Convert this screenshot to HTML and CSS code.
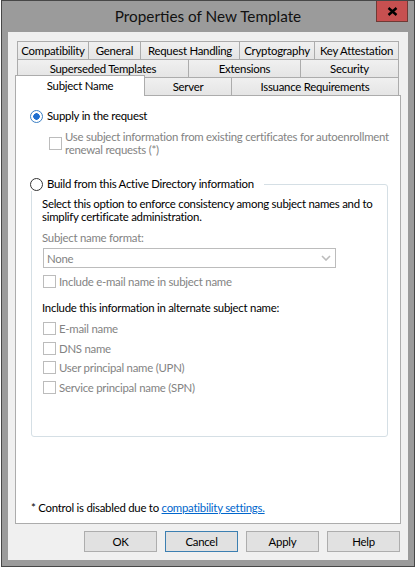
FILE: index.html
```html
<!DOCTYPE html>
<html lang="en">
<head>
    <meta charset="UTF-8">
    <meta name="viewport" content="width=device-width, initial-scale=1.0">
    <title>Properties of New Template</title>
    <link rel="stylesheet" href="styles.css">
</head>
<body>
    <div class="window">
        <div class="titlebar">
            <span></span>
            <div class="title">Properties of New Template</div>
            <div class="titlebar-end">
                <button class="close-btn" aria-label="Close">
                    <svg width="11" height="9" viewBox="0 0 11 9">
                        <path d="M1.5 1 L9.5 8 M9.5 1 L1.5 8" stroke="#000" stroke-width="2.4" fill="none"/>
                    </svg>
                </button>
            </div>
        </div>

        <div class="client">
            <div class="tabs">
                <div class="tab-row row-1">
                    <div class="tab">Compatibility</div>
                    <div class="tab">General</div>
                    <div class="tab">Request Handling</div>
                    <div class="tab">Cryptography</div>
                    <div class="tab">Key Attestation</div>
                </div>
                <div class="tab-row row-2">
                    <div class="tab">Superseded Templates</div>
                    <div class="tab">Extensions</div>
                    <div class="tab">Security</div>
                </div>
                <div class="tab-row row-3">
                    <div class="tab selected">Subject Name</div>
                    <div class="tab">Server</div>
                    <div class="tab">Issuance Requirements</div>
                </div>
            </div>

            <div class="panel">
                <div class="radio-line">
                    <span class="radio checked"></span>
                    <span>Supply in the request</span>
                </div>
                <div class="check-line sub disabled">
                    <span class="check"></span>
                    <span>Use subject information from existing certificates for autoenrollment<br>renewal requests (*)</span>
                </div>

                <fieldset class="group">
                    <legend class="radio-line">
                        <span class="radio"></span>
                        <span>Build from this Active Directory information</span>
                    </legend>
                    <p class="desc">Select this option to enforce consistency among subject names and to<br>simplify certificate administration.</p>
                    <div class="field-label disabled">Subject name format:</div>
                    <div class="select disabled">
                        <span>None</span>
                        <svg width="10" height="6" viewBox="0 0 10 6">
                            <path d="M1 1 L5 5 L9 1" stroke="#bcbcbc" stroke-width="1.6" fill="none"/>
                        </svg>
                    </div>
                    <div class="check-line disabled">
                        <span class="check"></span>
                        <span>Include e-mail name in subject name</span>
                    </div>
                    <div class="section-label">Include this information in alternate subject name:</div>
                    <div class="check-list">
                        <div class="check-line disabled"><span class="check"></span><span>E-mail name</span></div>
                        <div class="check-line disabled"><span class="check"></span><span>DNS name</span></div>
                        <div class="check-line disabled"><span class="check"></span><span>User principal name (UPN)</span></div>
                        <div class="check-line disabled"><span class="check"></span><span>Service principal name (SPN)</span></div>
                    </div>
                </fieldset>

                <div class="note">* Control is disabled due to <a href="#">compatibility settings.</a></div>
            </div>

            <div class="buttons">
                <button class="btn">OK</button>
                <button class="btn default">Cancel</button>
                <button class="btn">Apply</button>
                <button class="btn">Help</button>
            </div>
        </div>
    </div>
</body>
</html>
```

FILE: styles.css
```css
body {
    margin: 0;
    background-color: #ffffff;
    font-family: Lato, "Liberation Sans", sans-serif;
    font-size: 11.4px;
    letter-spacing: -0.25px;
    color: #000;
}
.window {
    box-sizing: border-box;
    width: 414px;
    height: 567px;
    margin-left: 1px;
    padding: 0 6px 6px;
    background-color: #9b9b9b;
    border: 1px solid #474747;
    display: flex;
    flex-direction: column;
}
.titlebar {
    height: 31px;
    flex: none;
    display: grid;
    grid-template-columns: 1fr auto 1fr;
}
.title {
    font-size: 15.3px;
    letter-spacing: 0;
    line-height: 31px;
    color: #111;
}
.titlebar-end {
    display: flex;
    justify-content: flex-end;
    align-items: flex-start;
}
.close-btn {
    box-sizing: border-box;
    width: 32px;
    height: 21px;
    padding: 0;
    border: 1px solid #6f3a35;
    border-top: none;
    background-color: #c75050;
    display: flex;
    align-items: center;
    justify-content: center;
}
.client {
    flex: 1;
    background-color: #f0f0f0;
    padding: 9px 7px 8px;
    display: flex;
    flex-direction: column;
}

/* tabs */
.tab-row {
    display: grid;
    height: 18px;
    margin: 0 2px;
}
.row-1 {
    grid-template-columns: 71px 52px 99px 75px 1fr;
}
.row-2 {
    grid-template-columns: 171px 112px 1fr;
}
.row-3 {
    grid-template-columns: 127px 87px 1fr;
}
.tab {
    border-top: 1px solid #acacac;
    border-left: 1px solid #acacac;
    background: linear-gradient(#f0f0f0, #e5e5e5);
    text-align: center;
    line-height: 17px;
    white-space: nowrap;
}
.tab:last-child {
    border-right: 1px solid #acacac;
}
.tab.selected {
    position: relative;
    margin: -2px -1px -1px -2px;
    border-right: 1px solid #acacac;
    background: #fff;
    line-height: 19px;
}

/* panel */
.panel {
    flex: 1;
    background-color: #fff;
    border: 1px solid #acacac;
    padding: 13px 12px 8px 14px;
    display: flex;
    flex-direction: column;
    white-space: nowrap;
}
.radio-line {
    display: flex;
    align-items: center;
    gap: 4px;
    line-height: 14px;
}
.radio {
    box-sizing: border-box;
    width: 13px;
    height: 13px;
    border: 1px solid #333;
    border-radius: 50%;
    background: #fff;
    flex: none;
}
.radio.checked {
    border-color: #3b7fc4;
    background: radial-gradient(circle, #1f6fd0 0 3px, #fff 3.5px);
}
.check-line {
    display: flex;
    align-items: center;
    gap: 3px;
    line-height: 13px;
}
.check {
    box-sizing: border-box;
    width: 13px;
    height: 13px;
    border: 1px solid #bcbcbc;
    background: #fff;
    flex: none;
}
.disabled {
    color: #838383;
}
.check-line.sub {
    margin: 7px 0 0 19px;
}
.group {
    margin: 21px 0 0 1px;
    padding: 6px 10px 42px;
    border: 1px solid #d5dfe5;
    border-radius: 3px;
}
.group legend {
    margin-left: -12px;
    padding: 0 10px 0 0;
}
.desc {
    margin: 0;
    line-height: 13px;
}
.field-label {
    margin-top: 8px;
    line-height: 13px;
}
.select {
    box-sizing: border-box;
    width: 293px;
    height: 20px;
    margin: 4px 0 0 1px;
    padding: 0 4px 0 3px;
    border: 1px solid #bcbcbc;
    background: #fff;
    display: flex;
    align-items: center;
    justify-content: space-between;
}
.group > .check-line {
    margin: 7px 0 0 1px;
}
.section-label {
    margin-top: 13px;
    line-height: 13px;
}
.check-list {
    margin: 8px 0 0 1px;
    display: flex;
    flex-direction: column;
    gap: 6.5px;
}
.note {
    margin-top: auto;
    line-height: 14px;
    padding-left: 1px;
}
.note a {
    color: #0066cc;
}

/* buttons */
.buttons {
    display: flex;
    justify-content: flex-end;
    gap: 8px;
    margin: 7px 1px 0 0;
}
.btn {
    box-sizing: border-box;
    width: 73px;
    height: 21px;
    padding: 0;
    border: 1px solid #adadad;
    background-color: #e1e1e1;
    font-family: inherit;
    font-size: 11.4px;
    letter-spacing: inherit;
    color: #000;
}
.btn.default {
    border-color: #3c7fb1;
}
```
